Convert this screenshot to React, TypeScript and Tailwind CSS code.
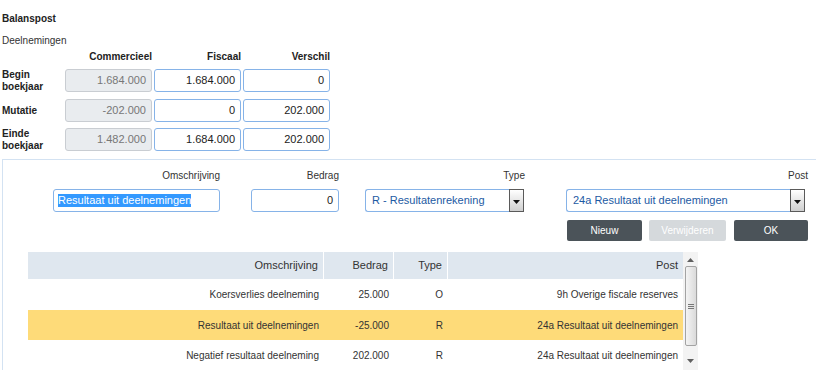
import React from 'react';

const rows = [
  { label: 'Begin boekjaar', com: '1.684.000', fis: '1.684.000', ver: '0', gap: 'mt-[5px]' },
  { label: 'Mutatie', com: '-202.000', fis: '0', ver: '202.000', gap: 'mt-[7px]' },
  { label: 'Einde boekjaar', com: '1.482.000', fis: '1.684.000', ver: '202.000', gap: 'mt-[6px]' },
];

const lines = [
  { oms: 'Koersverlies deelneming', bedrag: '25.000', type: 'O', post: '9h Overige fiscale reserves', active: false },
  { oms: 'Resultaat uit deelnemingen', bedrag: '-25.000', type: 'R', post: '24a Resultaat uit deelnemingen', active: true },
  { oms: 'Negatief resultaat deelneming', bedrag: '202.000', type: 'R', post: '24a Resultaat uit deelnemingen', active: false },
];

const SelectArrow = () => (
  <div className="flex h-[23px] w-[15px] shrink-0 items-center justify-center border border-[#5a5a5a] bg-gradient-to-b from-white to-[#cfcfcf] pt-[2px]">
    <svg width="7" height="4" viewBox="0 0 7 4">
      <path d="M0 0 H7 L3.5 4 Z" fill="#111" />
    </svg>
  </div>
);

const Select = ({ value, width }: { value: string; width: string }) => (
  <div className={`flex h-[23px] ${width} items-center rounded-l-[3px] border border-r-0 border-[#86b3e8] bg-white`}>
    <span className="flex-1 pl-[6px] text-[11px] text-[#1d5aa3]">{value}</span>
    <SelectArrow />
  </div>
);

const App: React.FC = () => {
  return (
    <div className="h-[371px] w-[816px] overflow-hidden bg-white font-['Liberation_Sans',Arial,sans-serif] text-[#333]">
      <div className="pl-[2px] pt-[12px]">
        <div className="text-[10px] font-bold leading-[14px] text-[#222]">Balanspost</div>
        <div className="mt-[8px] text-[10px] leading-[14px]">Deelnemingen</div>

        <div className="mt-[2px] flex text-[10px] font-bold leading-[14px] text-[#222]">
          <div className="w-[63px]" />
          <div className="w-[87px] text-right">Commercieel</div>
          <div className="ml-[2px] w-[87px] text-right">Fiscaal</div>
          <div className="ml-[2px] w-[87px] text-right">Verschil</div>
        </div>

        {rows.map((r) => (
          <div key={r.label} className={`flex h-[23px] items-center ${r.gap}`}>
            <div className="w-[63px] text-[10px] font-bold leading-[12px] text-[#222]">{r.label}</div>
            <div className="flex h-[23px] w-[87px] items-center justify-end rounded-[3px] border border-[#c9cdd2] bg-[#e9ecef] pr-[5px] text-[11px] text-[#777]">
              {r.com}
            </div>
            <div className="ml-[2px] flex h-[23px] w-[87px] items-center justify-end rounded-[3px] border border-[#86b3e8] bg-white pr-[5px] text-[11px] text-[#222]">
              {r.fis}
            </div>
            <div className="ml-[2px] flex h-[23px] w-[87px] items-center justify-end rounded-[3px] border border-[#86b3e8] bg-white pr-[5px] text-[11px] text-[#222]">
              {r.ver}
            </div>
          </div>
        ))}
      </div>

      <div className="ml-[2px] mt-[8px] border-l border-t border-[#d3e2f2] pt-[9px]">
        <div className="flex">
          <div className="ml-[50px] flex w-[167px] flex-col items-end">
            <span className="text-[10px] leading-[14px]">Omschrijving</span>
            <div className="mt-[6px] flex h-[23px] w-full items-center rounded-[3px] border border-[#86b3e8] bg-white pl-[4px]">
              <span className="bg-[#3399ff] text-[11px] leading-[13px] text-white">Resultaat uit deelnemingen</span>
            </div>
          </div>
          <div className="ml-[31px] flex w-[88px] flex-col items-end">
            <span className="text-[10px] leading-[14px]">Bedrag</span>
            <div className="mt-[6px] flex h-[23px] w-full items-center justify-end rounded-[3px] border border-[#86b3e8] bg-white pr-[5px] text-[11px] text-[#222]">
              0
            </div>
          </div>
          <div className="ml-[26px] flex w-[160px] flex-col items-end">
            <span className="text-[10px] leading-[14px]">Type</span>
            <div className="mt-[6px] w-full">
              <Select value="R - Resultatenrekening" width="w-[159px]" />
            </div>
          </div>
          <div className="ml-[41px] flex w-[242px] flex-col items-end">
            <span className="text-[10px] leading-[14px]">Post</span>
            <div className="mt-[6px] w-full">
              <Select value="24a Resultaat uit deelnemingen" width="w-[239px]" />
            </div>
          </div>
        </div>

        <div className="ml-[564px] mt-[8px] flex text-[10px] text-white">
          <button className="flex h-[21px] w-[75px] items-center justify-center rounded-[2px] bg-[#4b5359]">Nieuw</button>
          <button className="ml-[7px] flex h-[21px] w-[77px] items-center justify-center rounded-[2px] bg-[#d5d9dc]">Verwijderen</button>
          <button className="ml-[8px] flex h-[21px] w-[74px] items-center justify-center rounded-[2px] bg-[#4b5359]">OK</button>
        </div>

        <div className="ml-[25px] mt-[11px] flex h-[118px] overflow-hidden">
          <div className="w-[655px] text-[10px]">
            <div className="flex h-[27px] items-center bg-[#dfe7ef] text-[11px] text-[#333]">
              <div className="flex h-full w-[296px] items-center justify-end border-r border-white pr-[5px]">Omschrijving</div>
              <div className="flex h-full w-[70px] items-center justify-end border-r border-white pr-[5px]">Bedrag</div>
              <div className="flex h-full w-[54px] items-center justify-end border-r border-white pr-[5px]">Type</div>
              <div className="flex h-full flex-1 items-center justify-end pr-[5px]">Post</div>
            </div>
            {lines.map((l, i) => (
              <div
                key={l.oms}
                className={`flex items-center ${i === 0 ? 'h-[31px]' : 'h-[30px]'} ${l.active ? 'bg-[#fedb79]' : 'bg-white'}`}
              >
                <div className="w-[296px] pr-[5px] text-right">{l.oms}</div>
                <div className="w-[70px] pr-[5px] text-right">{l.bedrag}</div>
                <div className="w-[54px] pr-[5px] text-right">{l.type}</div>
                <div className="flex-1 pr-[5px] text-right">{l.post}</div>
              </div>
            ))}
          </div>

          <div className="flex h-[118px] w-[15px] flex-col items-center bg-[#f3f3f3]">
            <div className="flex h-[14px] items-center justify-center pt-[2px]">
              <svg width="7" height="4" viewBox="0 0 7 4">
                <path d="M0 4 H7 L3.5 0 Z" fill="#606060" />
              </svg>
            </div>
            <div className="flex h-[80px] w-[12px] items-center justify-center rounded-[2px] border border-[#a3a3a3] bg-gradient-to-r from-[#f4f4f4] to-[#dadada]">
              <div className="flex flex-col gap-[1px]">
                <div className="h-[1px] w-[6px] bg-[#777]" />
                <div className="h-[1px] w-[6px] bg-[#777]" />
                <div className="h-[1px] w-[6px] bg-[#777]" />
              </div>
            </div>
            <div className="flex flex-1 items-center justify-center pt-[6px]">
              <svg width="7" height="4" viewBox="0 0 7 4">
                <path d="M0 0 H7 L3.5 4 Z" fill="#606060" />
              </svg>
            </div>
          </div>
        </div>
      </div>
    </div>
  );
};

export default App;
